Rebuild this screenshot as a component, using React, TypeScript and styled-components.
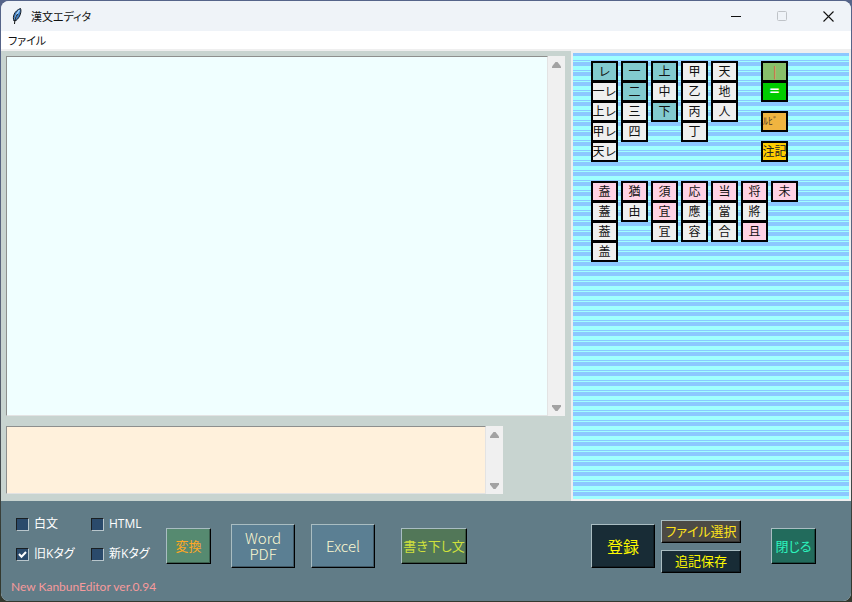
import React, { useState } from "react";
import styled, { createGlobalStyle } from "styled-components";

const jp = `"Noto Sans CJK JP", sans-serif`;
const ui = `"Open Sans", "Noto Sans CJK JP", sans-serif`;

const GlobalStyle = createGlobalStyle`
  *, *::before, *::after { box-sizing: border-box; }
  body { margin: 0; background: #3a4238; font-family: ${ui}; }
  button, input, textarea { margin: 0; font: inherit; }
`;

const Desktop = styled.div`
  display: flex;
  min-height: 100vh;
  padding: 1px;
  background: linear-gradient(#55648a, #5c6478 60%, #33392f 90%);
`;

const Window = styled.div`
  flex: 1;
  display: flex;
  flex-direction: column;
  border-radius: 8px;
  overflow: hidden;
  background: #efefef;
`;

const TitleBar = styled.header`
  display: flex;
  align-items: center;
  height: 30px;
  padding-left: 8px;
  background: #eff3f8;
`;

const Title = styled.h1`
  flex: 1;
  margin: 0 0 0 7px;
  font: 400 11px/20px ${jp};
  font-feature-settings: "palt";
  color: #111;
`;

const Caption = styled.button`
  display: grid;
  place-items: center;
  width: 46px;
  height: 30px;
  padding: 0;
  border: 0;
  background: none;
`;

const MenuBar = styled.nav`
  display: flex;
  height: 20px;
  background: #fff;
  border-bottom: 2px solid #efefef;
`;

const MenuItem = styled.button`
  padding: 0 7px;
  border: 0;
  background: none;
  font: 400 11px/18px ${jp};
  font-feature-settings: "palt";
  color: #111;
`;

const Main = styled.main`
  flex: 1;
  display: grid;
  grid-template-columns: minmax(0, 1fr) 280px;
`;

const Editors = styled.section`
  display: flex;
  flex-direction: column;
  gap: 10px;
  padding: 5px 6px 7px 5px;
  background: #c8d4d0;
`;

const Pane = styled.div<{ $small?: boolean }>`
  display: flex;
  flex: ${(p) => (p.$small ? "0 0 68px" : "1 1 auto")};
  margin-right: ${(p) => (p.$small ? "62px" : "0")};
`;

const TextBox = styled.textarea<{ $tint: string }>`
  flex: 1;
  min-width: 0;
  padding: 2px;
  border: 1px solid #e3e3e3;
  border-top-color: #8d8f8d;
  border-left-color: #8d8f8d;
  border-radius: 0;
  outline: 0;
  resize: none;
  overflow: hidden;
  background: ${(p) => p.$tint};
  font: 400 16px/24px ${jp};
`;

const ScrollTrack = styled.div`
  display: flex;
  flex-direction: column;
  justify-content: space-between;
  width: 17px;
  background: #f0f0f0;
`;

const ScrollButton = styled.button`
  display: grid;
  place-items: center;
  height: 17px;
  padding: 0;
  border: 0;
  background: none;
`;

const Palette = styled.section`
  padding: 8px 18px;
  border: 2px solid #efefef;
  background: repeating-linear-gradient(
    #8cc8ff 0 3px,
    #a0ffff 3px 7px,
    #8cc8ff 7px 8px,
    #a0ffff 8px 9px,
    #8cc8ff 9px 10px
  );
`;

const MarkRow = styled.div`
  display: flex;
  gap: 3px;
  & + & {
    margin-top: 19px;
  }
`;

const MarkColumn = styled.div<{ $indent?: boolean }>`
  display: flex;
  flex-direction: column;
  margin-left: ${(p) => (p.$indent ? "20px" : "0")};
`;

const Mark = styled.button<{ $bg: string; $ink?: string; $spaced?: boolean; $small?: boolean; $bold?: boolean }>`
  display: flex;
  align-items: center;
  justify-content: ${(p) => (p.$small ? "flex-start" : "center")};
  width: 27px;
  height: 21px;
  padding: 0 0 2px;
  border: 2px solid #000;
  overflow: hidden;
  white-space: nowrap;
  background: ${(p) => p.$bg};
  color: ${(p) => p.$ink || "#111"};
  font: ${(p) => (p.$bold ? 900 : 400)} ${(p) => (p.$small ? 10 : 12)}px/16px ${jp};
  &:not(:first-child) {
    margin-top: ${(p) => (p.$spaced ? "9px" : "-1px")};
  }
`;

const Footer = styled.footer`
  min-height: 100px;
  padding: 14px 35px 0 15px;
  background: #617c87;
`;

const Tools = styled.div`
  display: flex;
  align-items: center;
  height: 62px;
`;

const Checks = styled.div`
  display: grid;
  grid-template-columns: 75px 75px;
  row-gap: 12px;
  align-self: flex-start;
`;

const CheckLabel = styled.label`
  display: flex;
  align-items: center;
  gap: 5px;
  height: 18px;
  color: #fff;
  font: 400 12px/18px ${ui};
  font-feature-settings: "palt";
  white-space: nowrap;
`;

const CheckInput = styled.input`
  appearance: none;
  display: grid;
  place-items: center;
  width: 13px;
  height: 13px;
  border: 1px solid;
  border-color: #1a1f22 #b8c6cc #b8c6cc #1a1f22;
  border-radius: 0;
  background: #2a4a6b;
  &:checked {
    background: #2a4a6b
      url("data:image/svg+xml,%3Csvg xmlns='http://www.w3.org/2000/svg' viewBox='0 0 11 11'%3E%3Cpath d='M2 5l2.5 2.7L9 3' fill='none' stroke='white' stroke-width='2'/%3E%3C/svg%3E");
  }
`;

const ButtonGroup = styled.div<{ $push?: boolean; $gap?: number; $column?: boolean }>`
  display: flex;
  flex-direction: ${(p) => (p.$column ? "column" : "row")};
  align-items: center;
  gap: ${(p) => p.$gap || 0}px;
  margin-left: ${(p) => (p.$push ? "auto" : "0")};
`;

const sizes = {
  small: { w: 45, h: 36, f: 13 },
  large: { w: 64, h: 44, f: 16 },
  wide: { w: 66, h: 36, f: 13 },
  bar: { w: 80, h: 23, f: 13 },
};

const ToolButton = styled.button<{ $size: keyof typeof sizes; $bg: string; $ink: string; $latin?: boolean }>`
  width: ${(p) => sizes[p.$size].w}px;
  height: ${(p) => sizes[p.$size].h}px;
  padding: 0;
  border: 1px solid;
  border-color: #a9bdc2 #000 #000 #a9bdc2;
  box-shadow: inset -1px -1px 0 rgba(0, 0, 0, 0.3);
  background: ${(p) => p.$bg};
  color: ${(p) => p.$ink};
  font: ${(p) => (p.$latin ? 300 : 400)} ${(p) => (p.$latin ? 15 : sizes[p.$size].f)}px/16px ${jp};
  font-feature-settings: "palt";
  white-space: pre-line;
`;

const Version = styled.p`
  margin: 0 0 0 -5px;
  color: #f79a9c;
  font: 400 12px/20px Lato, ${ui};
`;

const Teal = "#82cacf";
const Plain = "#efefef";
const Pink = "#ffd2e4";

type Cell = [string, string];

const kaeriten: Cell[][] = [
  [["レ", Teal], ["一レ", Plain], ["上レ", Plain], ["甲レ", Plain], ["天レ", Plain]],
  [["一", Teal], ["二", Teal], ["三", Plain], ["四", Plain]],
  [["上", Teal], ["中", Plain], ["下", Teal]],
  [["甲", Plain], ["乙", Plain], ["丙", Plain], ["丁", Plain]],
  [["天", Plain], ["地", Plain], ["人", Plain]],
];

const saidoku: Cell[][] = [
  [["盍", Pink], ["蓋", Plain], ["葢", Plain], ["盖", Plain]],
  [["猶", Pink], ["由", Plain]],
  [["須", Pink], ["宜", Pink], ["冝", Plain]],
  [["応", Pink], ["應", Plain], ["容", Plain]],
  [["当", Pink], ["當", Plain], ["合", Plain]],
  [["将", Pink], ["將", Plain], ["且", Pink]],
  [["未", Pink]],
];

function Columns({ data }: { data: Cell[][] }) {
  return (
    <>
      {data.map((column, i) => (
        <MarkColumn key={i}>
          {column.map(([text, bg]) => (
            <Mark key={text} $bg={bg}>{text}</Mark>
          ))}
        </MarkColumn>
      ))}
    </>
  );
}

function Scrollbar() {
  return (
    <ScrollTrack>
      <ScrollButton aria-label="上へ">
        <svg width="9" height="7" viewBox="0 0 9 7"><path d="M0 7V5.500L3.500 1h2L9 5.500V7z" fill="#a3a3a3" /></svg>
      </ScrollButton>
      <ScrollButton aria-label="下へ">
        <svg width="9" height="7" viewBox="0 0 9 7"><path d="M0 1v1.500L3.500 7h2L9 2.500V1z" fill="#a3a3a3" /></svg>
      </ScrollButton>
    </ScrollTrack>
  );
}

function Feather() {
  return (
    <svg width="15" height="18" viewBox="0 0 15 18">
      <path d="M5 14C3.300 10 5 4 11.500 1.500c1.300 3-.5 9-4.500 12z" fill="#3b7cc4" stroke="#15191f" strokeWidth="1" />
      <path d="M10.500 3C8 6 6.500 9 6 12.500" fill="none" stroke="#a9d2f5" strokeWidth="1.400" />
      <path d="M8.500 7C6.500 10.500 5.700 13 5.500 17" fill="none" stroke="#111" strokeWidth="1" />
    </svg>
  );
}

function Check({ label, on }: { label: string; on?: boolean }) {
  const [checked, setChecked] = useState(Boolean(on));
  return (
    <CheckLabel>
      <CheckInput type="checkbox" checked={checked} onChange={() => setChecked(!checked)} />
      {label}
    </CheckLabel>
  );
}

export default function App() {
  return (
    <Desktop>
      <GlobalStyle />
      <Window>
        <TitleBar>
          <Feather />
          <Title>漢文エディタ</Title>
          <Caption aria-label="最小化">
            <svg width="11" height="11"><path d="M0 5.500h10" stroke="#111" /></svg>
          </Caption>
          <Caption aria-label="最大化" disabled>
            <svg width="11" height="11"><rect x=".5" y=".5" width="9" height="9" rx="1" fill="none" stroke="#bfc3c8" /></svg>
          </Caption>
          <Caption aria-label="閉じる">
            <svg width="11" height="11"><path d="M.5.5l10 10M10.500.5l-10 10" stroke="#111" strokeWidth="1.100" /></svg>
          </Caption>
        </TitleBar>
        <MenuBar>
          <MenuItem>ファイル</MenuItem>
        </MenuBar>
        <Main>
          <Editors>
            <Pane>
              <TextBox $tint="#f0ffff" aria-label="本文" spellCheck={false} />
              <Scrollbar />
            </Pane>
            <Pane $small>
              <TextBox $tint="#fff1dc" aria-label="書き下し文" spellCheck={false} />
              <Scrollbar />
            </Pane>
          </Editors>
          <Palette>
            <MarkRow>
              <Columns data={kaeriten} />
              <MarkColumn $indent>
                <Mark $bg="#88c06a" $ink="#f55a45">|</Mark>
                <Mark $bg="#00cc00" $ink="#fff" $bold>＝</Mark>
                <Mark $bg="#f0b440" $ink="#5a3c28" $spaced $small>ﾙﾋﾞ</Mark>
                <Mark $bg="#ffcc00" $ink="#222" $spaced>注記</Mark>
              </MarkColumn>
            </MarkRow>
            <MarkRow>
              <Columns data={saidoku} />
            </MarkRow>
          </Palette>
        </Main>
        <Footer>
          <Tools>
            <Checks>
              <Check label="白文" />
              <Check label="HTML" />
              <Check label="旧Kタグ" on />
              <Check label="新Kタグ" />
            </Checks>
            <ButtonGroup $gap={26}>
              <ButtonGroup $gap={20}>
                <ToolButton $size="small" $bg="#568a70" $ink="#ffa724">変換</ToolButton>
                <ButtonGroup $gap={16}>
                  <ToolButton $size="large" $bg="#5b7f93" $ink="#fbf8d0" $latin>{"Word\nPDF"}</ToolButton>
                  <ToolButton $size="large" $bg="#5b7f93" $ink="#fbf8d0" $latin>Excel</ToolButton>
                </ButtonGroup>
              </ButtonGroup>
              <ToolButton $size="wide" $bg="#527758" $ink="#cfe03c">書き下し文</ToolButton>
            </ButtonGroup>
            <ButtonGroup $push $gap={30}>
              <ButtonGroup $gap={6}>
                <ToolButton $size="large" $bg="#182c36" $ink="#fdf900">登録</ToolButton>
                <ButtonGroup $column $gap={7}>
                  <ToolButton $size="bar" $bg="#4c4a45" $ink="#ffe31a">ファイル選択</ToolButton>
                  <ToolButton $size="bar" $bg="#182c36" $ink="#fdf900">追記保存</ToolButton>
                </ButtonGroup>
              </ButtonGroup>
              <ToolButton $size="small" $bg="#226b5c" $ink="#2cf5be">閉じる</ToolButton>
            </ButtonGroup>
          </Tools>
          <Version>New KanbunEditor ver.0.94</Version>
        </Footer>
      </Window>
    </Desktop>
  );
}
